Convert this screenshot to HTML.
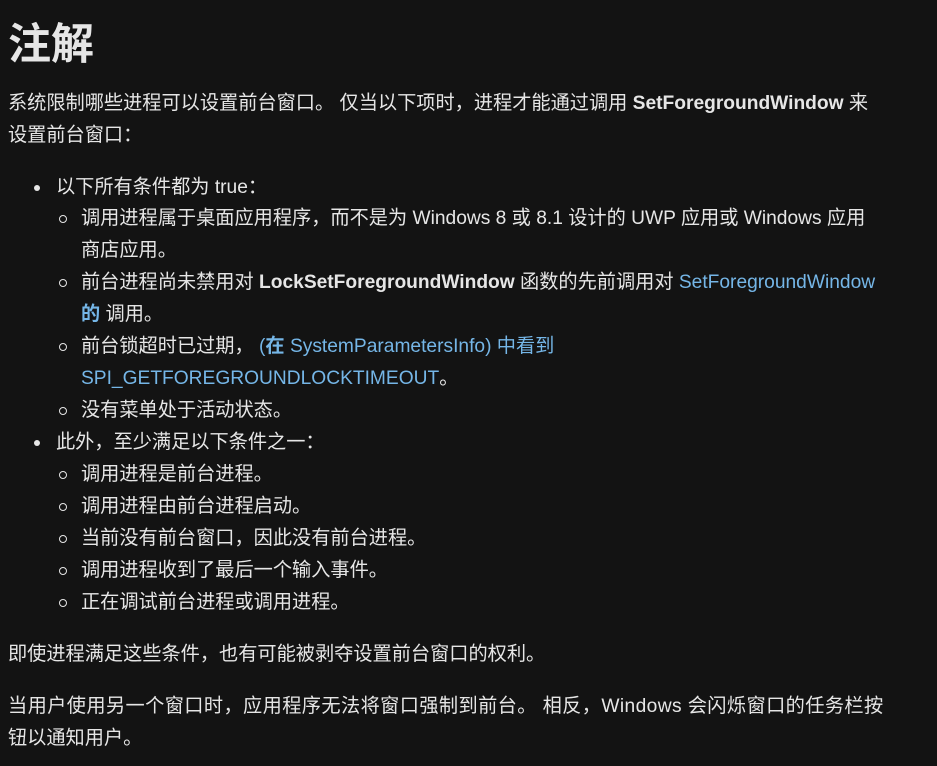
<!DOCTYPE html>
<html><head><meta charset="utf-8"><style>
body{margin:0;background:#131313;width:937px;height:764px;overflow:hidden;color:#e6e6e6;font-family:"Liberation Sans","Noto Sans CJK SC",sans-serif;font-size:19.2px;}
.w{position:absolute;left:0;top:2px;width:937px;height:764px}
.l{position:absolute;white-space:nowrap;line-height:32px;}
h1{position:absolute;left:8px;top:10px;margin:0;font-size:43px;line-height:58px;font-weight:bold;color:#e6e6e6;font-family:"Noto Sans CJK SC",sans-serif;}
a{color:#75b6e7;text-decoration:none}
b{font-weight:600}
.d{position:absolute;width:6px;height:6px;border-radius:50%;background:#e6e6e6}
.c{position:absolute;border-radius:50%;border:1.3px solid #e6e6e6;box-sizing:border-box;width:8px;height:8px}
</style></head><body><div class="w">
<h1>注解</h1>
<div class="l" style="left:8px;top:86px">系统限制哪些进程可以设置前台窗口。 仅当以下项时，进程才能通过调用 <b>SetForegroundWindow</b> 来</div>
<div class="l" style="left:8px;top:118px">设置前台窗口：</div>

<div class="d" style="left:34px;top:183px"></div>
<div class="l" style="left:56px;top:170px">以下所有条件都为 true：</div>
<div class="c" style="left:59px;top:213px"></div>
<div class="l" style="left:81px;top:201px">调用进程属于桌面应用程序，而不是为 Windows 8 或 8.1 设计的 UWP 应用或 Windows 应用</div>
<div class="l" style="left:81px;top:233px">商店应用。</div>
<div class="c" style="left:59px;top:277px"></div>
<div class="l" style="left:81px;top:265px">前台进程尚未禁用对 <b>LockSetForegroundWindow</b> 函数的先前调用对 <a>SetForegroundWindow</a></div>
<div class="l" style="left:81px;top:297px"><a><b>的</b></a> 调用。</div>
<div class="c" style="left:59px;top:341px"></div>
<div class="l" style="left:81px;top:329px">前台锁超时已过期， <a>(<b>在</b> SystemParametersInfo) 中看到</a></div>
<div class="l" style="left:81px;top:361px"><a>SPI_GETFOREGROUNDLOCKTIMEOUT</a>。</div>
<div class="c" style="left:59px;top:405px"></div>
<div class="l" style="left:81px;top:393px">没有菜单处于活动状态。</div>
<div class="d" style="left:34px;top:438px"></div>
<div class="l" style="left:56px;top:425px">此外，至少满足以下条件之一：</div>
<div class="c" style="left:59px;top:469px"></div>
<div class="l" style="left:81px;top:457px">调用进程是前台进程。</div>
<div class="c" style="left:59px;top:501px"></div>
<div class="l" style="left:81px;top:489px">调用进程由前台进程启动。</div>
<div class="c" style="left:59px;top:533px"></div>
<div class="l" style="left:81px;top:521px">当前没有前台窗口，因此没有前台进程。</div>
<div class="c" style="left:59px;top:565px"></div>
<div class="l" style="left:81px;top:553px">调用进程收到了最后一个输入事件。</div>
<div class="c" style="left:59px;top:597px"></div>
<div class="l" style="left:81px;top:585px">正在调试前台进程或调用进程。</div>

<div class="l" style="left:8px;top:637px">即使进程满足这些条件，也有可能被剥夺设置前台窗口的权利。</div>
<div class="l" style="left:8px;top:689px;letter-spacing:0.4px">当用户使用另一个窗口时，应用程序无法将窗口强制到前台。 相反，Windows 会闪烁窗口的任务栏按</div>
<div class="l" style="left:8px;top:721px">钮以通知用户。</div>
</div></body></html>
